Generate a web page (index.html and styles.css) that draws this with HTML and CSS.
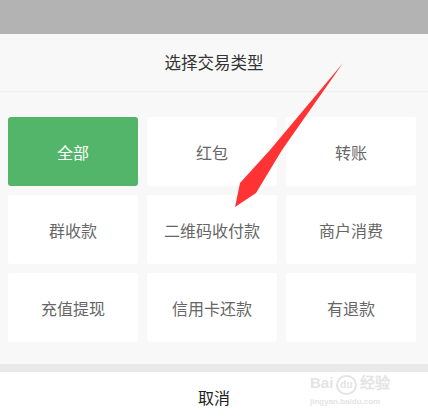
FILE: index.html
```html
<!DOCTYPE html>
<html lang="zh-CN">
<head>
    <meta charset="UTF-8">
    <meta name="viewport" content="width=device-width, initial-scale=1.0">
    <title>选择交易类型</title>
    <link rel="stylesheet" href="styles.css">
</head>
<body>
    <div class="mask"></div>
    <div class="sheet">
        <div class="sheet-title">选择交易类型</div>
        <div class="type-grid">
            <div class="type-item active">全部</div>
            <div class="type-item">红包</div>
            <div class="type-item">转账</div>
            <div class="type-item">群收款</div>
            <div class="type-item">二维码收付款</div>
            <div class="type-item">商户消费</div>
            <div class="type-item">充值提现</div>
            <div class="type-item">信用卡还款</div>
            <div class="type-item">有退款</div>
        </div>
    </div>
    <div class="sep"></div>
    <div class="cancel">取消</div>

    <!-- 标注箭头 -->
    <svg class="arrow" width="428" height="419" viewBox="0 0 428 419">
        <polygon points="343,63 282,150 256,193 235,207 240,183 270,150" fill="#ff3333"/>
    </svg>

    <div class="watermark">
        <div class="wm-logo">Bai<span class="wm-paw">du</span>经验</div>
        <div class="wm-url">jingyan.baidu.com</div>
    </div>
</body>
</html>
```

FILE: styles.css
```css
body {
    margin: 0;
    font-family: "Noto Sans CJK SC", "Noto Sans", sans-serif;
    background: #fff;
    width: 428px;
    height: 419px;
    overflow: hidden;
    position: relative;
}
.mask {
    height: 34px;
    background: #b3b3b3;
}
.sheet {
    background: #f8f8f8;
}
.sheet-title {
    height: 57px;
    line-height: 57px;
    text-align: center;
    font-size: 16.5px;
    color: #333;
    border-bottom: 1px solid #efefef;
}
.type-grid {
    display: grid;
    grid-template-columns: repeat(3, 130px);
    grid-auto-rows: 69px;
    gap: 9px;
    padding: 25px 0 22px 8px;
}
.type-item {
    background: #fff;
    border-radius: 3px;
    display: flex;
    align-items: center;
    justify-content: center;
    font-size: 16px;
    color: #666;
}
.type-item.active {
    background: #52b56a;
    color: #fff;
}
.sep {
    height: 8px;
    background: #e9e9e9;
}
.cancel {
    height: 47px;
    line-height: 50px;
    text-align: center;
    font-size: 16px;
    color: #222;
    background: #fff;
}
.arrow {
    position: absolute;
    left: 0;
    top: 0;
    pointer-events: none;
}
.watermark {
    position: absolute;
    left: 310px;
    top: 375px;
    color: #e4e4e4;
    font-family: "Liberation Sans", sans-serif;
    font-weight: bold;
}
.wm-logo {
    font-size: 15px;
    line-height: 16px;
}
.wm-paw {
    display: inline-block;
    font-size: 10px;
    border: 2px solid #e4e4e4;
    border-radius: 50%;
    padding: 0 2px;
    margin: 0 3px;
}
.wm-url {
    font-size: 8px;
    margin-top: 2px;
}
```
